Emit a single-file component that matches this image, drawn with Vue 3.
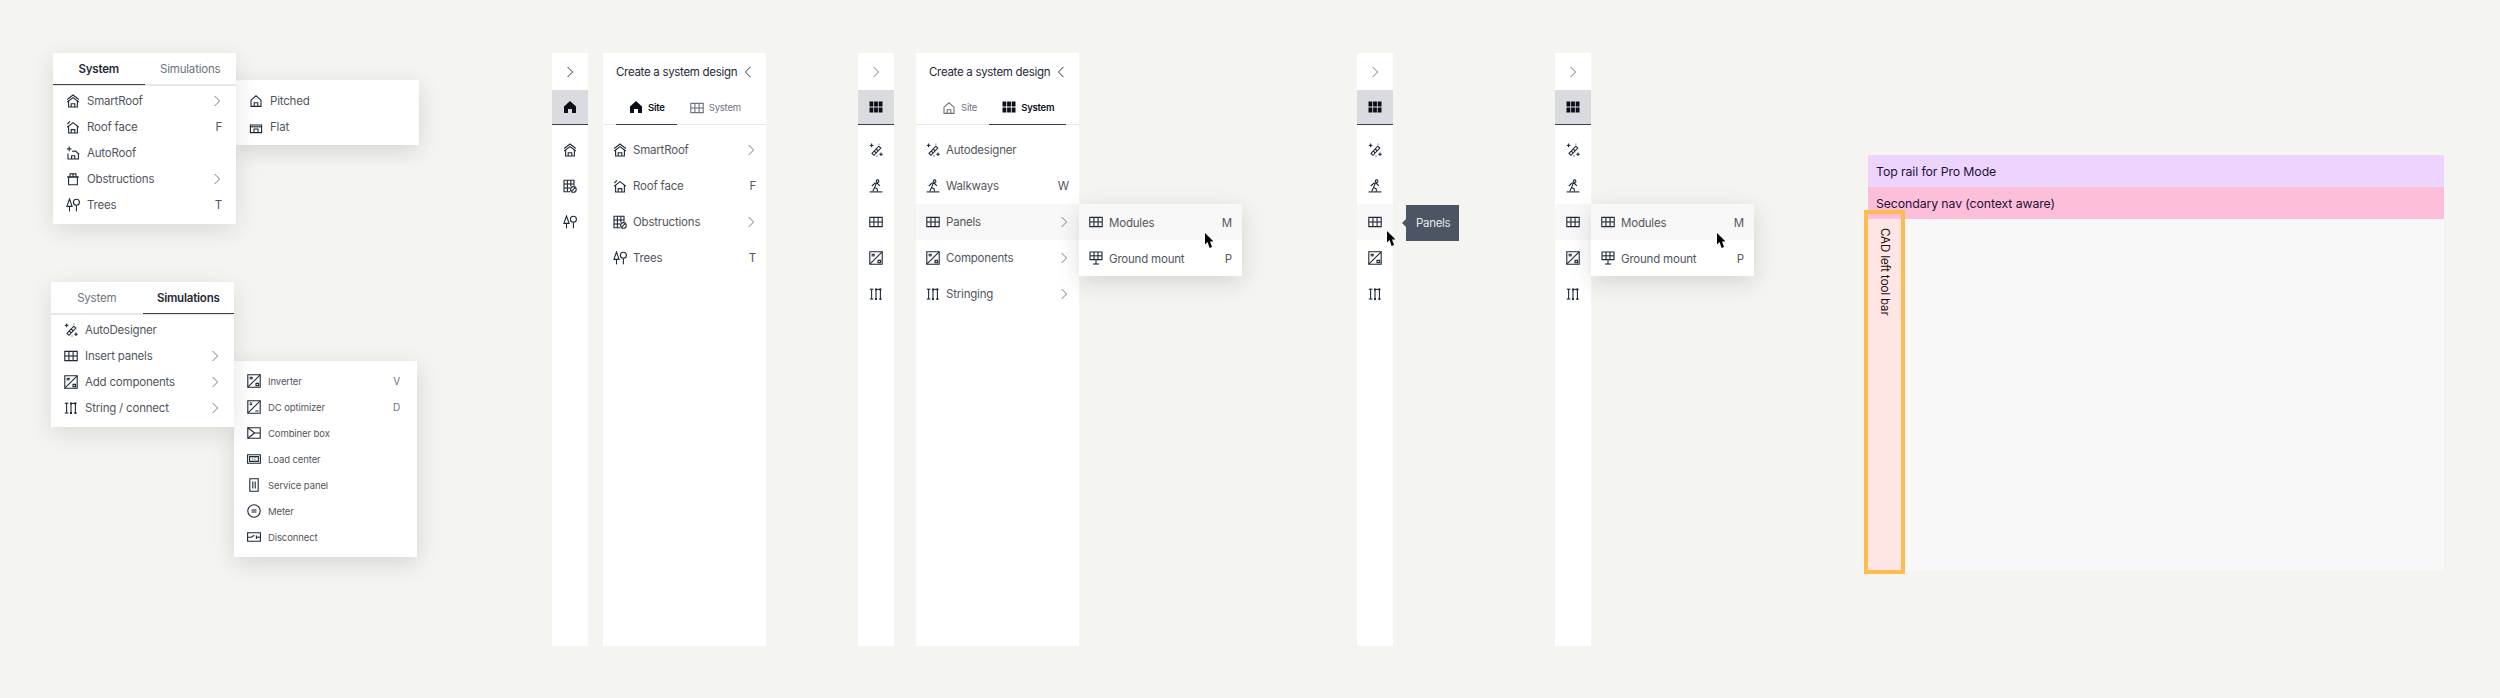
<script setup>
import { h } from 'vue'

const shapes = {
  smartroof: ['M1.2 5.5 7 1l5.8 4.5', 'M1.2 8 7 3.6 12.8 8', 'M2.6 7v6h8.8V7', 'M5.2 13V9.8h3.6V13'],
  roofface: ['M1.2 7.2 7 2.6l5.8 4.6', 'M2.6 6.2V13h8.8V6.2', 'M5.2 13V9.6h3.6V13', 'M1.4 4 4 1.4'],
  autoroof: ['M3.2 .6v4.6', 'M.8 2.9h4.8', 'M6 5.2l3.6-.2 3.6 3.4', 'M2 7.4V13h10.4V7.4', 'M5.6 13V9.8h3.2V13'],
  pitched: ['M2 12.4V6.2L7 1.8l5 4.4v6.2z', 'M5.2 12.4V8.8h3.6v3.6'],
  flat: ['M1.4 5h11.2v7.6H1.4z', 'M1.4 6.8h11.2', 'M5 12.6V9h4v3.6'],
  pot: ['M2.6 5h8.8v7.8H2.6z', 'M1 5h12', 'M4 1.6v3.4', 'M7 1.6v3.4', 'M10 1.6v3.4', 'M4 1.8h6'],
  obstruct: ['M7 12.8H1V1.2h10v5.6', 'M1 5h10', 'M1 9h6', 'M4.4 1.2v11.6', 'M7.8 1.2v6', 'C 10.4 10.4 2.8', 'M8.6 12.2l3.6-3.6'],
  trees: ['M3.5 1 .9 8.4h5.2z', 'M3.5 8.4v5', 'C 10.4 4.2 3', 'M10.4 7.2v6'],
  wand: ['M3 10.4 9.8 3.2l2 1.9-6.8 7.2z', 'M5.2 8l2 1.9', 'M7.2 6l2 1.9', 'M2.6.6v3.6', 'M.8 2.4h3.6', 'M12 9.6v3.4', 'M10.3 11.3h3.4', 'M8 12.6v.8', 'M10 .8v.8'],
  panels: ['M.8 2.4h12.4v9.2H.8z', 'M.8 7h12.4', 'M4.9 2.4v9.2', 'M9.1 2.4v9.2'],
  comp: ['M.8 .8h12.4v12.4H.8z', 'M.8 13.2 13.2.8', 'M2.6 3.4h3.2', 'M2.6 4.8h3.2', 'M9 9.4h2.6v2.2H9z'],
  opt: ['M.8 .8h12.4v12.4H.8z', 'M.8 13.2 13.2.8', 'M2.6 3h2.6', 'M2.6 4.6h2.6', 'M8.4 11h3'],
  string: ['M2.6 2v10', 'M.8 2.2h3.6', 'M.8 12h3.6', 'M7 2v10', 'M11.4 2v10', 'M7 2.4h4.4', 'F M6 1.4h2v2H6z', 'F M10.4 1.4h2v2h-2z', 'F M6 11h2v2H6z', 'F M10.4 11h2v2h-2z'],
  walk: ['C 8.6 2.2 1.3', 'M2.8 7l3.2-3 2.6.6 2.2 2.2', 'M7.2 4.4 5.6 8.4l2.6 1.4.2 2.8', 'M5.6 8.4 3.8 12.2', 'M.6 12.9h12.8'],
  ground: ['M1 1h12v7.6H1z', 'M1 4.8h12', 'M5 1v7.6', 'M9 1v7.6', 'M7 8.6v4.4', 'M4 13h6'],
  combiner: ['M.8 1.8h12.4v10.4H.8z', 'M.8 1.8 7.6 7h5.6', 'M.8 12.2 7.6 7'],
  load: ['M.6 2.8h12.8v8.4H.6z', 'M2.6 4.6h8.8v4.8H2.6z', 'T LC'],
  service: ['M2.8 .8h8.4v12.4H2.8z', 'M5.8 3.6v6.8', 'M8.2 3.6v6.8'],
  meter: ['C 7 7 6.2', 'M4.6 6h4.8', 'M4.6 8h4.8'],
  disconnect: ['M.6 2.8h12.8v8.4H.6z', 'M.6 7.2h3.6l3.2-2', 'M9.4 7.2h4', 'M9.4 5.4v3.6'],
  home: ['F M7 1 13 6.4V13H9V9H5v4H1V6.4z'],
  grid: ['F M.5 1.5h3.8v5H.5z', 'F M5.1 1.5h3.8v5H5.1z', 'F M9.7 1.5h3.8v5H9.7z', 'F M.5 7.5h3.8v5H.5z', 'F M5.1 7.5h3.8v5H5.1z', 'F M9.7 7.5h3.8v5H9.7z'],
  right: ['M4.6 2 9.6 7l-5 5'],
  left: ['M9.4 2 4.4 7l5 5']
}

const Icon = (props) => {
  const kids = shapes[props.name].map((s) => {
    if (s[0] === 'F') return h('path', { d: s.slice(2), fill: 'currentColor', stroke: 'none' })
    if (s[0] === 'C') {
      const [cx, cy, r] = s.slice(2).split(' ')
      return h('circle', { cx, cy, r })
    }
    if (s[0] === 'T') {
      return h('text', { x: 7, y: 8.4, 'font-size': 3.6, 'text-anchor': 'middle', fill: 'currentColor', stroke: 'none', 'font-family': 'Inter, sans-serif' }, s.slice(2))
    }
    return h('path', { d: s })
  })
  const thin = props.name === 'right' || props.name === 'left'
  return h('svg', { viewBox: '0 0 14 14', width: 14, height: 14, fill: 'none', stroke: 'currentColor', 'stroke-width': thin ? 0.95 : 1.1 }, kids)
}
Icon.props = ['name']

const menuSystem = [
  { icon: 'smartroof', label: 'SmartRoof', arrow: true },
  { icon: 'roofface', label: 'Roof face', key: 'F' },
  { icon: 'autoroof', label: 'AutoRoof' },
  { icon: 'pot', label: 'Obstructions', arrow: true },
  { icon: 'trees', label: 'Trees', key: 'T' }
]
const subRoof = [
  { icon: 'pitched', label: 'Pitched' },
  { icon: 'flat', label: 'Flat' }
]
const menuSim = [
  { icon: 'wand', label: 'AutoDesigner' },
  { icon: 'panels', label: 'Insert panels', arrow: true },
  { icon: 'comp', label: 'Add components', arrow: true },
  { icon: 'string', label: 'String / connect', arrow: true }
]
const subComp = [
  { icon: 'comp', label: 'Inverter', key: 'V' },
  { icon: 'opt', label: 'DC optimizer', key: 'D' },
  { icon: 'combiner', label: 'Combiner box' },
  { icon: 'load', label: 'Load center' },
  { icon: 'service', label: 'Service panel' },
  { icon: 'meter', label: 'Meter' },
  { icon: 'disconnect', label: 'Disconnect' }
]
const systemIcons = ['wand', 'walk', 'panels', 'comp', 'string']
const rails = [
  { cls: 'rail-a', chevron: 'dark', active: 'home', icons: ['smartroof', 'obstruct', 'trees'], hover: -1 },
  { cls: 'rail-b', chevron: '', active: 'grid', icons: systemIcons, hover: -1 },
  { cls: 'rail-c', chevron: '', active: 'grid', icons: systemIcons, hover: 2, tooltip: 'Panels' },
  { cls: 'rail-d', chevron: '', active: 'grid', icons: systemIcons, hover: 2, flyout: true }
]
const panels = [
  {
    cls: 'panel-a',
    tabs: [
      { icon: 'home', label: 'Site', on: true },
      { icon: 'panels', label: 'System' }
    ],
    rows: [
      { icon: 'smartroof', label: 'SmartRoof', arrow: true },
      { icon: 'roofface', label: 'Roof face', key: 'F' },
      { icon: 'obstruct', label: 'Obstructions', arrow: true },
      { icon: 'trees', label: 'Trees', key: 'T' }
    ]
  },
  {
    cls: 'panel-b',
    flyout: true,
    tabs: [
      { icon: 'pitched', label: 'Site' },
      { icon: 'grid', label: 'System', on: true }
    ],
    rows: [
      { icon: 'wand', label: 'Autodesigner' },
      { icon: 'walk', label: 'Walkways', key: 'W' },
      { icon: 'panels', label: 'Panels', arrow: true, hover: true },
      { icon: 'comp', label: 'Components', arrow: true },
      { icon: 'string', label: 'Stringing', arrow: true }
    ]
  }
]
const mountRows = [
  { icon: 'panels', label: 'Modules', key: 'M', hover: true },
  { icon: 'ground', label: 'Ground mount', key: 'P' }
]
</script>

<template>
  <div class="canvas">
    <!-- Dropdown: System -->
    <section class="frame menu menu-a">
      <div class="menu-card">
        <div class="menu-tabs">
          <span class="menu-tab on">System</span>
          <span class="menu-tab">Simulations</span>
        </div>
        <div class="menu-rows">
          <div v-for="r in menuSystem" :key="r.label" class="row row-26">
            <Icon :name="r.icon" class="ico" />
            <span class="label">{{ r.label }}</span>
            <span v-if="r.key" class="key">{{ r.key }}</span>
            <Icon v-if="r.arrow" name="right" class="ico chev" />
          </div>
        </div>
      </div>
      <div class="pop pop-roof">
        <div v-for="r in subRoof" :key="r.label" class="row row-26">
          <Icon :name="r.icon" class="ico" />
          <span class="label">{{ r.label }}</span>
        </div>
      </div>
    </section>

    <!-- Dropdown: Simulations -->
    <section class="frame menu menu-b">
      <div class="menu-card">
        <div class="menu-tabs">
          <span class="menu-tab">System</span>
          <span class="menu-tab on">Simulations</span>
        </div>
        <div class="menu-rows">
          <div v-for="r in menuSim" :key="r.label" class="row row-26">
            <Icon :name="r.icon" class="ico" />
            <span class="label">{{ r.label }}</span>
            <Icon v-if="r.arrow" name="right" class="ico chev" />
          </div>
        </div>
      </div>
      <div class="pop pop-comp">
        <div v-for="r in subComp" :key="r.label" class="row row-26 small">
          <Icon :name="r.icon" class="ico" />
          <span class="label">{{ r.label }}</span>
          <span v-if="r.key" class="key">{{ r.key }}</span>
        </div>
      </div>
    </section>

    <!-- Collapsed rails -->
    <aside v-for="rail in rails" :key="rail.cls" class="frame rail" :class="rail.cls">
      <div class="rail-head" :class="rail.chevron">
        <Icon name="right" class="ico" />
      </div>
      <div class="rail-active">
        <Icon :name="rail.active" class="ico" />
      </div>
      <div class="rail-list">
        <div v-for="(name, i) in rail.icons" :key="name" class="rail-item" :class="{ hover: i === rail.hover }">
          <Icon :name="name" class="ico" />
        </div>
      </div>
      <template v-if="rail.tooltip">
        <div class="tooltip">{{ rail.tooltip }}</div>
        <svg class="cursor cursor-rail" viewBox="0 0 8 15" width="8" height="15"><path d="M0 0v11.5l2.6-2.4L4.6 15l2.4-1-2-5.6H8.4z" fill="#000" /></svg>
      </template>
      <div v-if="rail.flyout" class="pop pop-mount">
        <div v-for="r in mountRows" :key="r.label" class="row row-36" :class="{ hover: r.hover }">
          <Icon :name="r.icon" class="ico" />
          <span class="label down">{{ r.label }}</span>
          <span class="key down">{{ r.key }}</span>
        </div>
        <svg class="cursor cursor-pop" viewBox="0 0 8 15" width="8" height="15"><path d="M0 0v11.5l2.6-2.4L4.6 15l2.4-1-2-5.6H8.4z" fill="#000" /></svg>
      </div>
    </aside>

    <!-- Expanded panels -->
    <aside v-for="p in panels" :key="p.cls" class="frame panel" :class="p.cls">
      <header class="panel-head">
        <span class="panel-title">Create a system design</span>
        <Icon name="left" class="ico" />
      </header>
      <nav class="panel-tabs">
        <span v-for="t in p.tabs" :key="t.label" class="panel-tab" :class="{ on: t.on }">
          <Icon :name="t.icon" class="ico" />
          <span>{{ t.label }}</span>
        </span>
      </nav>
      <div class="panel-rows">
        <div v-for="r in p.rows" :key="r.label" class="row row-36" :class="{ hover: r.hover }">
          <Icon :name="r.icon" class="ico" />
          <span class="label">{{ r.label }}</span>
          <span v-if="r.key" class="key">{{ r.key }}</span>
          <Icon v-if="r.arrow" name="right" class="ico chev" />
        </div>
      </div>
      <div v-if="p.flyout" class="pop pop-mount">
        <div v-for="r in mountRows" :key="r.label" class="row row-36" :class="{ hover: r.hover }">
          <Icon :name="r.icon" class="ico" />
          <span class="label down">{{ r.label }}</span>
          <span class="key down">{{ r.key }}</span>
        </div>
        <svg class="cursor cursor-pop" viewBox="0 0 8 15" width="8" height="15"><path d="M0 0v11.5l2.6-2.4L4.6 15l2.4-1-2-5.6H8.4z" fill="#000" /></svg>
      </div>
    </aside>

    <!-- Layout diagram -->
    <section class="frame diagram">
      <div class="band band-top">Top rail for Pro Mode</div>
      <div class="band band-second">Secondary nav (context aware)</div>
      <div class="diagram-body">
        <div class="toolbar"><span class="toolbar-text">CAD left tool bar</span></div>
        <div class="stage"></div>
      </div>
      <div class="outline"></div>
    </section>
  </div>
</template>

<style>
html, body { margin: 0; background: #f4f4f0; }
</style>

<style scoped>
.canvas {
  position: relative;
  width: 2500px;
  height: 698px;
  overflow: hidden;
  background: #f4f4f0;
  font-family: Inter, "Liberation Sans", sans-serif;
  font-size: 11.5px;
  letter-spacing: -0.2px;
  color: #52565e;
}
.frame { position: absolute; }
.ico { flex: none; display: block; color: #1f2937; }

/* Rows */
.row { display: flex; align-items: center; gap: 6px; padding: 0 10px; }
.row-26 { height: 26px; gap: 7px; padding: 0 14px 0 13px; }
.row-36 { height: 36px; }
.row.hover { background: #f8f8f8; }
.label { flex: 1; white-space: nowrap; }
.key { color: #52565e; }
.down { padding-top: 2px; }
.chev { color: #6b7280; margin-right: -2px; }
.small { font-size: 9.5px; letter-spacing: -0.1px; padding: 0 17px 0 13px; }
.small .key { color: #6b7280; font-size: 10px; }

/* Dropdown menus */
.menu { width: 183px; }
.menu-a { left: 53px; top: 53px; }
.menu-b { left: 51px; top: 282px; }
.menu-card {
  position: relative;
  z-index: 2;
  background: #fff;
  padding-bottom: 6px;
  box-shadow: 0 6px 22px rgba(30, 30, 30, 0.12);
}
.menu-tabs { display: flex; }
.menu-tab {
  flex: 1;
  height: 33px;
  box-sizing: border-box;
  display: flex;
  align-items: center;
  justify-content: center;
  color: #6b7280;
  border-bottom: 1px solid #e5e7eb;
  box-shadow: inset 0 -1px 0 #e5e7eb;
}
.menu-tab.on { color: #1f2937; font-weight: 600; box-shadow: inset 0 -1px 0 #374151; }
.menu-rows { padding-top: 2px; }
.pop {
  position: absolute;
  left: 100%;
  width: 183px;
  box-sizing: border-box;
  background: #fff;
  box-shadow: 0 6px 22px rgba(30, 30, 30, 0.14);
}
.pop-roof { top: 27px; padding: 8px 0 5px; z-index: 1; }
.pop-comp { top: 79px; padding: 7px 0; z-index: 1; }
.pop-mount { top: 151px; width: 163px; z-index: 3; }

/* Rails */
.rail { top: 53px; width: 36px; height: 593px; background: #fff; }
.rail-a { left: 552px; }
.rail-b { left: 858px; }
.rail-c { left: 1357px; }
.rail-d { left: 1555px; }
.rail-head { height: 37px; display: flex; align-items: center; justify-content: center; }
.rail-head .ico { color: #6b7280; }
.rail-head.dark .ico { color: #1f2937; }
.rail-active {
  height: 35px;
  box-sizing: border-box;
  background: #d9dbde;
  border-bottom: 1px solid #374151;
  display: flex;
  align-items: center;
  justify-content: center;
}
.rail-active .ico { color: #0b0f19; }
.rail-list { padding-top: 7px; }
.rail-item { height: 36px; display: flex; align-items: center; justify-content: center; }
.rail-item.hover { background: #f8f8f8; }
.tooltip {
  position: absolute;
  left: 49px;
  top: 152px;
  width: 53px;
  height: 36px;
  box-sizing: border-box;
  padding-left: 10px;
  display: flex;
  align-items: center;
  background: #4b5563;
  color: #e5e7eb;
  letter-spacing: -0.3px;
}
.tooltip::before {
  content: "";
  position: absolute;
  left: -4px;
  top: 14px;
  border-style: solid;
  border-width: 4px 4px 4px 0;
  border-color: transparent #4b5563 transparent transparent;
}
.cursor { position: absolute; z-index: 4; }
.cursor-rail { left: 30px; top: 178px; }
.cursor-pop { left: 126px; top: 29px; }

/* Panels */
.panel { top: 53px; width: 163px; height: 593px; background: #fff; }
.panel-a { left: 603px; }
.panel-b { left: 916px; }
.panel-head {
  height: 37px;
  box-sizing: border-box;
  padding: 0 11px 0 13px;
  display: flex;
  align-items: center;
  justify-content: space-between;
}
.panel-title { color: #1f2937; letter-spacing: -0.3px; white-space: nowrap; }
.panel-tabs { height: 35px; box-sizing: border-box; padding-left: 13px; display: flex; border-bottom: 1px solid #e5e7eb; }
.panel-tab {
  height: 35px;
  box-sizing: border-box;
  padding: 0 12px 0 13px;
  display: flex;
  align-items: center;
  gap: 5px;
  font-size: 9.5px;
  color: #6b7280;
}
.panel-tab .ico { color: #6b7280; }
.panel-tab.on { color: #0b0f19; font-weight: 600; border-bottom: 1px solid #374151; }
.panel-tab.on .ico { color: #0b0f19; }
.panel-rows { padding-top: 7px; }

/* Diagram */
.diagram { left: 1868px; top: 155px; width: 576px; height: 416px; display: flex; flex-direction: column; color: #1f1235; font-size: 12.3px; letter-spacing: -0.1px; }
.band { height: 32px; flex: none; box-sizing: border-box; padding-left: 8px; display: flex; align-items: center; }
.band-top { background: #ecd4fe; }
.band-second { background: #fdbed9; }
.diagram-body { flex: 1; display: flex; background: #f8f8f8; }
.toolbar { width: 33px; background: #ffe5e4; display: flex; justify-content: center; padding-top: 9px; box-sizing: border-box; }
.toolbar-text { writing-mode: vertical-rl; white-space: nowrap; color: #111; font-size: 11.5px; letter-spacing: -0.1px; }
.stage { flex: 1; }
.outline {
  position: absolute;
  left: -4px;
  top: 55px;
  width: 41px;
  height: 364px;
  box-sizing: border-box;
  border: 4px solid #febc4f;
}
</style>
